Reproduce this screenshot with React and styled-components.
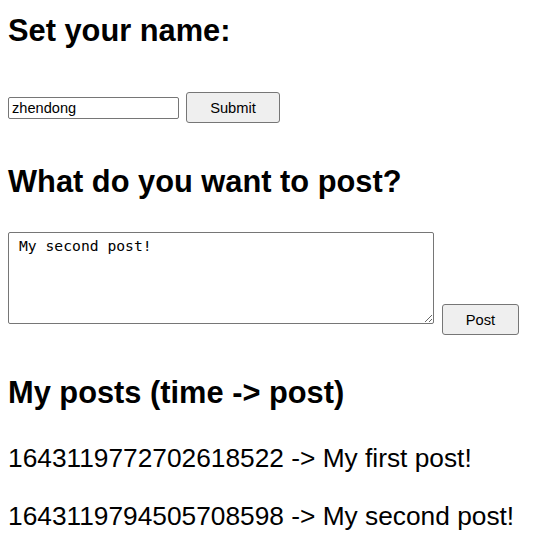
import React, { useState } from 'react'
import styled, { createGlobalStyle } from 'styled-components'

const GlobalStyle = createGlobalStyle`
  body {
    margin: 0;
    background: #fff;
    color: #000;
    font-family: 'Liberation Sans', Arial, sans-serif;
  }
`

const Page = styled.div`
  display: flex;
  flex-direction: column;
  align-items: flex-start;
  padding: 13px 8px 0;
`

const Heading = styled.h2`
  margin: ${p => p.top || 0}px 0 0;
  font-size: 30.8px;
  line-height: 36px;
  font-weight: bold;
`

const Row = styled.div`
  display: flex;
  align-items: ${p => p.align || 'center'};
  gap: ${p => p.gap || 7}px;
  margin-top: ${p => p.top || 0}px;
`

const NameInput = styled.input`
  box-sizing: border-box;
  width: 171px;
  height: 22px;
  margin: 0;
  padding: 1px 3px;
  border: 1px solid #767676;
  border-radius: 2px;
  font-family: 'Liberation Sans', Arial, sans-serif;
  font-size: 14.6px;
  color: #000;
  outline: none;
`

const PostArea = styled.textarea`
  box-sizing: border-box;
  width: 426px;
  height: 92px;
  margin: 0;
  padding: 4px 10px;
  border: 1px solid #767676;
  border-radius: 2px;
  font-family: 'DejaVu Sans Mono', monospace;
  font-size: 14.7px;
  line-height: 17px;
  color: #000;
  resize: both;
  outline: none;
`

const Button = styled.button`
  box-sizing: border-box;
  width: ${p => p.w}px;
  height: 31px;
  margin: ${p => p.top || 0}px 0 0;
  padding: 0;
  background: #efefef;
  border: 1px solid #767676;
  border-radius: 3px;
  font-family: 'Liberation Sans', Arial, sans-serif;
  font-size: 14.7px;
  color: #000;
`

const PostList = styled.div`
  display: flex;
  flex-direction: column;
  gap: 28px;
  margin-top: 32px;
`

const PostLine = styled.p`
  margin: 0;
  font-size: 26.3px;
  line-height: 30px;
`

export default function App() {
  const [name, setName] = useState('zhendong')
  const [draft, setDraft] = useState('My second post!')
  const posts = [
    ['1643119772702618522', 'My first post!'],
    ['1643119794505708598', 'My second post!'],
  ]

  return (
    <>
      <GlobalStyle />
      <Page>
        <Heading>Set your name:</Heading>
        <Row top={43}>
          <NameInput value={name} onChange={e => setName(e.target.value)} />
          <Button w={94}>Submit</Button>
        </Row>

        <Heading top={41}>What do you want to post?</Heading>
        <Row top={32} align="flex-start" gap={8}>
          <PostArea value={draft} onChange={e => setDraft(e.target.value)} />
          <Button w={77} top={72}>Post</Button>
        </Row>

        <Heading top={40}>My posts (time -&gt; post)</Heading>
        <PostList>
          {posts.map(([time, text]) => (
            <PostLine key={time}>
              {time} -&gt; {text}
            </PostLine>
          ))}
        </PostList>
      </Page>
    </>
  )
}
